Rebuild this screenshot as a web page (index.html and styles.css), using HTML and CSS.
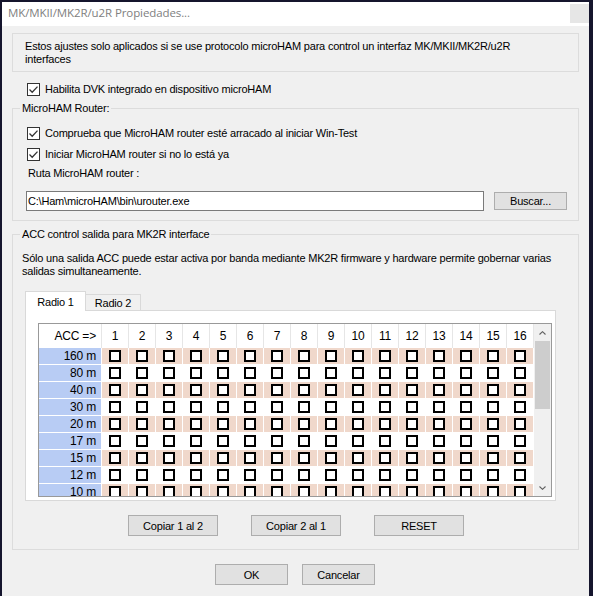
FILE: index.html
```html
<!DOCTYPE html>
<html lang="es">
<head>
<meta charset="utf-8">
<title>MK/MKII/MK2R/u2R Propiedades...</title>
<link rel="stylesheet" href="styles.css">
</head>
<body>
<div class="window">
  <div class="titlebar">
    <span class="title">MK/MKII/MK2R/u2R Propiedades...</span>
    <span class="close"></span>
  </div>
  <div class="content">
    <div class="info">Estos ajustes solo aplicados si se use protocolo microHAM para control un interfaz MK/MKII/MK2R/u2R<br>interfaces</div>

    <div class="check dvk"><span class="box"><svg viewBox="0 0 11 11" width="11" height="11"><path d="M1.5 5.5 L4.2 8.2 L9.5 2.6" fill="none" stroke="#333" stroke-width="1.3"/></svg></span>Habilita DVK integrado en dispositivo microHAM</div>

    <fieldset class="group router">
      <legend>MicroHAM Router:</legend>
      <div class="check r1"><span class="box"><svg viewBox="0 0 11 11" width="11" height="11"><path d="M1.5 5.5 L4.2 8.2 L9.5 2.6" fill="none" stroke="#333" stroke-width="1.3"/></svg></span>Comprueba que MicroHAM router esté arracado al iniciar Win-Test</div>
      <div class="check r2"><span class="box"><svg viewBox="0 0 11 11" width="11" height="11"><path d="M1.5 5.5 L4.2 8.2 L9.5 2.6" fill="none" stroke="#333" stroke-width="1.3"/></svg></span>Iniciar MicroHAM router si no lo está ya</div>
      <div class="ruta">Ruta MicroHAM router :</div>
      <div class="pathrow">
        <div class="input">C:\Ham\microHAM\bin\urouter.exe</div>
        <div class="btn buscar">Buscar...</div>
      </div>
    </fieldset>

    <fieldset class="group acc">
      <legend>ACC control salida para MK2R interface</legend>
      <p class="note">Sólo una salida ACC puede estar activa por banda mediante MK2R firmware y hardware permite gobernar varias<br>salidas simultaneamente.</p>
      <div class="tabs">
        <div class="tab active">Radio 1</div>
        <div class="tab">Radio 2</div>
      </div>
      <div class="panel">
        <div class="grid">
          <div class="rows">
            <div class="row head"><div class="lbl">ACC =&gt;</div><div class="c">1</div><div class="c">2</div><div class="c">3</div><div class="c">4</div><div class="c">5</div><div class="c">6</div><div class="c">7</div><div class="c">8</div><div class="c">9</div><div class="c">10</div><div class="c">11</div><div class="c">12</div><div class="c">13</div><div class="c">14</div><div class="c">15</div><div class="c">16</div></div>
            <div class="row odd"><div class="lbl">160 m</div><div class="c"><i></i></div><div class="c"><i></i></div><div class="c"><i></i></div><div class="c"><i></i></div><div class="c"><i></i></div><div class="c"><i></i></div><div class="c"><i></i></div><div class="c"><i></i></div><div class="c"><i></i></div><div class="c"><i></i></div><div class="c"><i></i></div><div class="c"><i></i></div><div class="c"><i></i></div><div class="c"><i></i></div><div class="c"><i></i></div><div class="c"><i></i></div></div>
            <div class="row"><div class="lbl">80 m</div><div class="c"><i></i></div><div class="c"><i></i></div><div class="c"><i></i></div><div class="c"><i></i></div><div class="c"><i></i></div><div class="c"><i></i></div><div class="c"><i></i></div><div class="c"><i></i></div><div class="c"><i></i></div><div class="c"><i></i></div><div class="c"><i></i></div><div class="c"><i></i></div><div class="c"><i></i></div><div class="c"><i></i></div><div class="c"><i></i></div><div class="c"><i></i></div></div>
            <div class="row odd"><div class="lbl">40 m</div><div class="c"><i></i></div><div class="c"><i></i></div><div class="c"><i></i></div><div class="c"><i></i></div><div class="c"><i></i></div><div class="c"><i></i></div><div class="c"><i></i></div><div class="c"><i></i></div><div class="c"><i></i></div><div class="c"><i></i></div><div class="c"><i></i></div><div class="c"><i></i></div><div class="c"><i></i></div><div class="c"><i></i></div><div class="c"><i></i></div><div class="c"><i></i></div></div>
            <div class="row"><div class="lbl">30 m</div><div class="c"><i></i></div><div class="c"><i></i></div><div class="c"><i></i></div><div class="c"><i></i></div><div class="c"><i></i></div><div class="c"><i></i></div><div class="c"><i></i></div><div class="c"><i></i></div><div class="c"><i></i></div><div class="c"><i></i></div><div class="c"><i></i></div><div class="c"><i></i></div><div class="c"><i></i></div><div class="c"><i></i></div><div class="c"><i></i></div><div class="c"><i></i></div></div>
            <div class="row odd"><div class="lbl">20 m</div><div class="c"><i></i></div><div class="c"><i></i></div><div class="c"><i></i></div><div class="c"><i></i></div><div class="c"><i></i></div><div class="c"><i></i></div><div class="c"><i></i></div><div class="c"><i></i></div><div class="c"><i></i></div><div class="c"><i></i></div><div class="c"><i></i></div><div class="c"><i></i></div><div class="c"><i></i></div><div class="c"><i></i></div><div class="c"><i></i></div><div class="c"><i></i></div></div>
            <div class="row"><div class="lbl">17 m</div><div class="c"><i></i></div><div class="c"><i></i></div><div class="c"><i></i></div><div class="c"><i></i></div><div class="c"><i></i></div><div class="c"><i></i></div><div class="c"><i></i></div><div class="c"><i></i></div><div class="c"><i></i></div><div class="c"><i></i></div><div class="c"><i></i></div><div class="c"><i></i></div><div class="c"><i></i></div><div class="c"><i></i></div><div class="c"><i></i></div><div class="c"><i></i></div></div>
            <div class="row odd"><div class="lbl">15 m</div><div class="c"><i></i></div><div class="c"><i></i></div><div class="c"><i></i></div><div class="c"><i></i></div><div class="c"><i></i></div><div class="c"><i></i></div><div class="c"><i></i></div><div class="c"><i></i></div><div class="c"><i></i></div><div class="c"><i></i></div><div class="c"><i></i></div><div class="c"><i></i></div><div class="c"><i></i></div><div class="c"><i></i></div><div class="c"><i></i></div><div class="c"><i></i></div></div>
            <div class="row"><div class="lbl">12 m</div><div class="c"><i></i></div><div class="c"><i></i></div><div class="c"><i></i></div><div class="c"><i></i></div><div class="c"><i></i></div><div class="c"><i></i></div><div class="c"><i></i></div><div class="c"><i></i></div><div class="c"><i></i></div><div class="c"><i></i></div><div class="c"><i></i></div><div class="c"><i></i></div><div class="c"><i></i></div><div class="c"><i></i></div><div class="c"><i></i></div><div class="c"><i></i></div></div>
            <div class="row odd"><div class="lbl">10 m</div><div class="c"><i></i></div><div class="c"><i></i></div><div class="c"><i></i></div><div class="c"><i></i></div><div class="c"><i></i></div><div class="c"><i></i></div><div class="c"><i></i></div><div class="c"><i></i></div><div class="c"><i></i></div><div class="c"><i></i></div><div class="c"><i></i></div><div class="c"><i></i></div><div class="c"><i></i></div><div class="c"><i></i></div><div class="c"><i></i></div><div class="c"><i></i></div></div>
          </div>
          <div class="scroll">
            <div class="arrow"><svg viewBox="0 0 7 4" width="7" height="4"><path d="M0.5 3.5 L3.5 0.7 L6.5 3.5" fill="none" stroke="#606060" stroke-width="1.1"/></svg></div>
            <div class="thumb"></div>
            <div class="track"></div>
            <div class="arrow"><svg viewBox="0 0 7 4" width="7" height="4"><path d="M0.5 0.5 L3.5 3.3 L6.5 0.5" fill="none" stroke="#606060" stroke-width="1.1"/></svg></div>
          </div>
        </div>
      </div>
      <div class="btnrow">
        <div class="btn copy1">Copiar 1 al 2</div>
        <div class="btn">Copiar 2 al 1</div>
        <div class="btn">RESET</div>
      </div>
    </fieldset>

    <div class="dlgbtns">
      <div class="btn ok">OK</div>
      <div class="btn">Cancelar</div>
    </div>
  </div>
</div>
</body>
</html>
```

FILE: styles.css
```css
* { box-sizing: border-box; }

body {
  margin: 0;
  background: #15152d;
  font-family: "Liberation Sans", Arial, sans-serif;
  font-size: 11px;
  letter-spacing: -0.2px;
  color: #000;
}

.window {
  margin: 2px 0 0 2px;
  width: 587px;
  height: 594px;
  background: #f0f0f0;
  overflow: hidden;
}

.titlebar {
  height: 24px;
  background: #fff;
  display: flex;
  justify-content: space-between;
  align-items: flex-start;
}

.title {
  font-family: "Open Sans", "Noto Sans", sans-serif;
  font-size: 11.5px;
  letter-spacing: -0.1px;
  color: #808080;
  line-height: 22px;
  padding-left: 6px;
}

.close {
  width: 19px;
  height: 19px;
  margin-top: 2px;
  background: #e6e6e6;
}

.content {
  padding: 0 10px;
}

.info {
  margin-top: 7px;
  border: 1px solid #dcdcdc;
  padding: 6px 12px 5px;
  line-height: 13px;
}

.check {
  display: flex;
  align-items: center;
  gap: 5px;
  line-height: 13px;
}

.box {
  width: 13px;
  height: 13px;
  border: 1px solid #333;
  background: #fff;
  display: flex;
  flex: none;
}

.dvk {
  margin: 11px 0 0 15px;
}

.group {
  margin: 6px 0 0;
  padding: 12px 0 9px 7px;
  border: 1px solid #dcdcdc;
  min-width: 0;
}

.group legend {
  padding: 0 2px;
  line-height: 13px;
}

.r1 { margin-left: 7px; }
.r2 { margin: 8px 0 0 7px; }

.ruta {
  margin: 6px 0 0 8px;
  line-height: 13px;
}

.pathrow {
  display: flex;
  align-items: flex-start;
  margin: 11px 0 0 6px;
}

.input {
  width: 458px;
  height: 20px;
  border: 1px solid #7a7a7a;
  background: #fff;
  padding-left: 1px;
  line-height: 18px;
}

.btn {
  height: 21px;
  width: 90px;
  background: #e1e1e1;
  border: 1px solid #adadad;
  display: flex;
  align-items: center;
  justify-content: center;
}

.buscar {
  width: 73px;
  height: 18px;
  margin: 1px 0 0 10px;
}

.acc {
  margin-top: 7px;
  padding: 11px 0 13px 7px;
}

.note {
  margin: 0 0 0 2px;
  line-height: 13px;
}

.tabs {
  display: flex;
  align-items: flex-end;
  height: 19px;
  margin: 13px 0 0 5px;
}

.tab {
  height: 16px;
  width: 56px;
  margin-left: -1px;
  border: 1px solid #d9d9d9;
  border-bottom: none;
  background: #f0f0f0;
  display: flex;
  align-items: center;
  justify-content: center;
}

.tab.active {
  width: 61px;
  height: 20px;
  margin-left: 0;
  margin-bottom: -1px;
  background: #fff;
  position: relative;
  z-index: 1;
}

.panel {
  width: 531px;
  margin-left: 5px;
  border: 1px solid #d9d9d9;
  background: #fff;
  padding: 12px 3px 3px 12px;
}

.grid {
  display: flex;
  width: 514px;
  height: 174px;
  border: 1px solid #999;
  background: #fff;
  overflow: hidden;
}

.rows {
  width: 495px;
  flex: none;
}

.row {
  display: flex;
  height: 17px;
  border-bottom: 1px solid #fff;
}

.row.head {
  height: 24px;
  border-bottom: none;
  font-size: 12px;
}

.lbl {
  width: 63px;
  flex: none;
  border-right: 1px solid #fff;
  background: #b8ccf4;
  padding-right: 5px;
  display: flex;
  align-items: center;
  justify-content: flex-end;
  font-size: 12px;
}

.c {
  width: 27px;
  flex: none;
  border-right: 1px solid #fff;
  display: flex;
  align-items: center;
  justify-content: center;
}

.odd .c {
  background: #f0d8cb;
}

.head .lbl,
.head .c {
  background: #fff;
  border-right-color: #e6e6e6;
}

.c i {
  width: 12px;
  height: 12px;
  border: 2px solid #000;
  background: #fff;
}

.scroll {
  width: 17px;
  flex: none;
  background: #f0f0f0;
  display: flex;
  flex-direction: column;
}

.arrow {
  height: 17px;
  flex: none;
  display: flex;
  align-items: center;
  justify-content: center;
}

.thumb {
  height: 68px;
  margin: 0 1px;
  background: #cdcdcd;
  flex: none;
}

.track {
  flex: 1;
}

.btnrow {
  display: flex;
  gap: 33px;
  margin: 14px 0 0 108px;
}

.dlgbtns {
  display: flex;
  gap: 14px;
  margin: 14px 0 0 203px;
}

.dlgbtns .btn {
  width: 73px;
}
```
